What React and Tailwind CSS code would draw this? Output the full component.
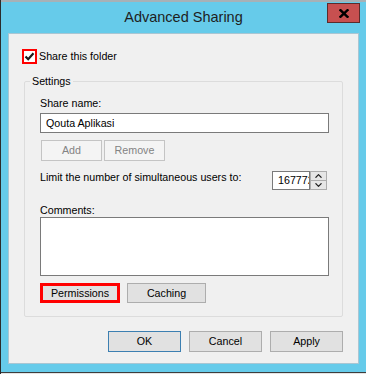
import React from 'react';

function Btn({ children, className = '' }) {
  return (
    <button className={`flex items-center justify-center bg-[#e1e1e1] border border-[#adadad] text-black ${className}`}>
      {children}
    </button>
  );
}

function Chevron({ up }) {
  return (
    <svg width="7" height="4" viewBox="0 0 7 4" fill="none" stroke="#1e1e1e" strokeWidth="1.2">
      <path d={up ? 'M0.5 3.7L3.5 0.7L6.5 3.7' : 'M0.5 0.3L3.5 3.3L6.5 0.3'} />
    </svg>
  );
}

export default function App() {
  return (
    <div className="w-[366px] h-[374px] flex flex-col bg-[#66cbea] border-l border-[#2b2b2b] font-['Liberation_Sans',Arial,sans-serif] text-[10.7px] leading-[13px] text-black">
      {/* Top edge */}
      <div className="h-[2px] bg-[#a7b1b6]" />

      {/* Title bar */}
      <div className="grid grid-cols-[1fr_auto_1fr] h-[31px]">
        <div />
        <div className="pt-[6px] text-[14.5px] leading-[18px] text-[#1e1e1e]">Advanced Sharing</div>
        <div className="flex justify-end items-start pr-[6px]">
          <button className="mt-[1px] w-[33px] h-[20px] bg-[#c75050] border border-[#5b2c2c] flex items-center justify-center">
            <svg width="10" height="9" viewBox="0 0 10 9" fill="none" stroke="#000" strokeWidth="2.4" strokeLinecap="square">
              <path d="M1.5 1.2L8.5 7.8M8.5 1.2L1.5 7.8" />
            </svg>
          </button>
        </div>
      </div>

      {/* Dialog body */}
      <div className="mx-[7px] h-[331px] flex flex-col bg-[#f0f0f0] border border-[#a9c6d3]">
        <div className="flex items-center gap-[2px] pl-[13px] pt-[15px]">
          <div className="w-[15px] h-[15px] border-2 border-[#ff0000] bg-white flex items-center justify-center">
            <svg width="11" height="11" viewBox="0 0 11 11" fill="none" stroke="#1a1a1a" strokeWidth="2.2">
              <path d="M1.5 5.5L4.2 8.2L9.5 2.2" />
            </svg>
          </div>
          <span>Share this folder</span>
        </div>

        <fieldset className="mx-[15px] mt-[11px] border border-[#dcdcdc] rounded-[2px]">
          <legend className="ml-[5px] px-[2px]">Settings</legend>
          <div className="flex flex-col pl-[15px] pr-[13px] pt-[9px] pb-[13px]">
            <span>Share name:</span>
            <div className="mt-[3px] h-[20px] border border-[#7a7a7a] bg-white pl-[5px] flex items-center">Qouta Aplikasi</div>

            <div className="mt-[7px] ml-[1px] flex gap-[2px]">
              <button className="w-[61px] h-[21px] border border-[#c4c4c4] bg-[#f4f4f4] text-[#838383]">Add</button>
              <button className="w-[61px] h-[21px] border border-[#c4c4c4] bg-[#f4f4f4] text-[#838383]">Remove</button>
            </div>

            <div className="mt-[10px] flex justify-between items-start pr-[2px]">
              <span>Limit the number of simultaneous users to:</span>
              <div className="flex h-[19px]">
                <div className="w-[38px] border border-[#7a7a7a] bg-white pl-[5px] flex items-center overflow-hidden whitespace-nowrap">16777216</div>
                <div className="w-[17px] flex flex-col border border-[#acacac] bg-[#e6e6e6]">
                  <div className="flex-1 flex items-center justify-center border-b border-[#acacac]"><Chevron up /></div>
                  <div className="flex-1 flex items-center justify-center"><Chevron /></div>
                </div>
              </div>
            </div>

            <span className="mt-[14px]">Comments:</span>
            <div className="h-[59px] border border-[#7a7a7a] bg-white" />

            <div className="mt-[7px] flex gap-[7px]">
              <button className="w-[80px] h-[20px] border-[3px] border-[#ff0000] bg-[#e1e1e1] flex items-center justify-center">Permissions</button>
              <Btn className="w-[79px] h-[20px]">Caching</Btn>
            </div>
          </div>
        </fieldset>

        <div className="mt-[14px] flex justify-end gap-[8px] pr-[15px]">
          <Btn className="w-[73px] h-[21px] !border-[#3c7fb1]">OK</Btn>
          <Btn className="w-[73px] h-[21px]">Cancel</Btn>
          <Btn className="w-[73px] h-[21px]">Apply</Btn>
        </div>
      </div>

      <div className="h-[8px]" />
      {/* Desktop peeking below the window */}
      <div className="h-[1px] bg-[#3d3d3d]" />
      <div className="h-[1px] bg-[#e4e4e4]" />
    </div>
  );
}
